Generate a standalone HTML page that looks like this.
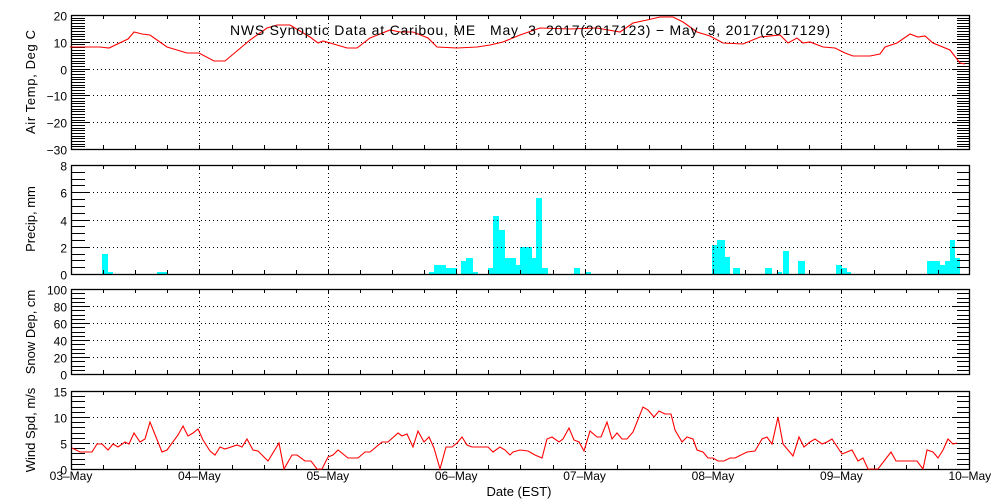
<!DOCTYPE html>
<html><head><meta charset="utf-8"><style>
html,body{margin:0;padding:0;background:#fff}
svg{display:block}
text{font-family:"Liberation Sans",sans-serif;fill:#000}
</style></head><body>
<svg id="s" width="1000" height="500" xmlns="http://www.w3.org/2000/svg">
<rect width="1000" height="500" fill="#fff"/>
<g id="g"></g>
<text x="230" y="35" font-size="14" xml:space="preserve" textLength="600" lengthAdjust="spacing">NWS Synoptic Data at Caribou, ME   May  3, 2017(2017123) − May  9, 2017(2017129)</text>
<text x="519" y="496" font-size="13" text-anchor="middle">Date (EST)</text>
<text transform="translate(35,82) rotate(-90)" font-size="13" text-anchor="middle" textLength="104" lengthAdjust="spacing">Air Temp, Deg C</text>
<text transform="translate(35,219) rotate(-90)" font-size="13" text-anchor="middle">Precip, mm</text>
<text transform="translate(35,332) rotate(-90)" font-size="13" text-anchor="middle">Snow Dep, cm</text>
<text transform="translate(35,430) rotate(-90)" font-size="13" text-anchor="middle">Wind Spd, m/s</text>
</svg>
<script>
var g=document.getElementById('g');
var h='';
var X0=71,X1=970,DAY=128.4;
function L(x1,y1,x2,y2,ex){h+='<line x1="'+x1+'" y1="'+y1+'" x2="'+x2+'" y2="'+y2+'" stroke="#000" stroke-width="1" '+(ex||'')+'/>';}
var dot='stroke-dasharray="1,3"';
var panels=[
 {top:15,bot:149,vmin:-30,vmax:20,major:10,minor:1},
 {top:165,bot:274,vmin:0,vmax:8,major:2,minor:0.5},
 {top:289,bot:374,vmin:0,vmax:100,major:20,minor:5},
 {top:391,bot:469,vmin:0,vmax:15,major:5,minor:1}
];
var bars=[[102,108,254],[108,113,272],[157,167,272],[429,434,272],[434,446,265],[446,457,268],[461,466,261],[466,473,258],[473,478,272],[488,493,268],[493,499,216],[499,505,230],[505,516,258],[516,520,265],[520,532,247],[532,536,258],[536,542,198],[542,548,268],[574,580,268],[586,591,272],[712,717,245],[717,725,240],[725,730,257],[733,740,268],[765,772,268],[778,782,272],[783,789,251],[798,805,261],[836,842,265],[842,847,268],[847,851,272],[927,940,261],[940,945,265],[945,950,261],[950,955,240],[955,960,258]];
bars.forEach(function(b){h+='<rect x="'+b[0]+'" y="'+b[2]+'" width="'+(b[1]-b[0])+'" height="'+(274-b[2])+'" fill="#00ffff"/>';});
panels.forEach(function(p,i){
 var sc=(p.bot-p.top)/(p.vmax-p.vmin);
 for(var v=p.vmin;v<=p.vmax+1e-6;v+=p.minor){
  var y=Math.round(p.bot-(v-p.vmin)*sc)+0.5;
  var isMaj=Math.abs(v/p.major-Math.round(v/p.major))<1e-6;
  if(isMaj){
   L(X0,y,89,y);L(952,y,X1,y);
   if(v!=p.vmin&&v!=p.vmax) L(89,y,952,y,dot);
   var lab=(v<0?'−'+(-v):''+v);
   h+='<text x="67" y="'+(y+5)+'" font-size="12" text-anchor="end">'+lab+'</text>';
  } else {L(X0,y,85,y);L(957,y,X1,y);}
 }
 for(var k=1;k<28;k++){
  var x=Math.round(X0+k*DAY/4)+0.5;
  if(k%4==0){L(x,p.top,x,p.bot,dot);}
  L(x,p.top,x,p.top+4);L(x,p.bot-4,x,p.bot);
 }
 h+='<rect x="'+(X0+0.5)+'" y="'+(p.top+0.5)+'" width="'+(X1-X0-1)+'" height="'+(p.bot-p.top)+'" fill="none" stroke="#000" stroke-width="1.3"/>';
});
var days=['03–May','04–May','05–May','06–May','07–May','08–May','09–May','10–May'];
days.forEach(function(d,i){h+='<text x="'+(X0+i*DAY)+'" y="480" font-size="12" text-anchor="middle">'+d+'</text>';});
var temp='70,47 100,47 109,48 128,39 134,32 142,34 150,35 167,47 187,53 199,53 214,61 225,61 250,40 267,28 277,25 290,25 310,37 318,43 323,41 337,45 347,48 357,48 370,38 390,30 400,32 413,32 428,38 437,47 457,48 477,47 490,45 503,42 520,35 540,28 570,29 597,28 620,32 633,23 647,20 660,17 673,17 683,22 697,32 710,36 723,43 743,44 760,37 780,35 788,43 797,38 803,43 810,42 823,47 835,48 845,53 853,56 870,56 880,54 885,47 897,43 910,34 918,37 925,36 933,43 950,50 960,63 965,64';
var wind='72,448 80,452 92,452 97,444 102,444 108,450 113,444 118,447 125,442 129,444 134,433 140,442 145,439 150,422 162,452 167,450 178,435 183,426 188,436 193,433 198,429 203,440 210,451 215,455 220,447 225,449 237,445 242,447 247,439 253,450 258,451 268,461 279,443 284,469 292,455 297,455 305,461 311,461 317,469 322,469 328,457 333,455 338,450 348,458 358,458 365,452 370,452 382,442 388,442 398,433 402,436 407,434 413,447 418,431 424,442 429,437 434,448 440,469 446,447 452,447 457,443 462,437 467,445 472,447 488,447 493,452 500,447 505,450 510,455 513,452 520,450 528,451 535,455 542,458 547,439 552,437 559,442 563,439 569,428 574,440 579,442 584,451 590,431 597,437 601,437 607,422 612,439 617,433 622,439 627,439 633,432 643,407 648,410 654,417 659,411 665,414 671,414 675,430 682,442 687,437 693,439 697,450 703,452 708,458 713,458 718,461 724,461 730,458 735,458 747,452 755,451 762,439 767,437 772,444 778,417 783,444 793,456 799,437 804,447 810,442 815,439 822,444 827,442 832,439 842,454 847,452 852,450 858,461 863,458 868,469 878,469 891,452 896,461 917,461 923,469 927,450 933,452 938,458 943,450 948,439 953,444 957,443';
h+='<polyline points="'+temp+'" fill="none" stroke="#ff0000" stroke-width="1.1"/>';
h+='<polyline points="'+wind+'" fill="none" stroke="#ff0000" stroke-width="1.1"/>';
g.innerHTML=h;
</script>
</body></html>
